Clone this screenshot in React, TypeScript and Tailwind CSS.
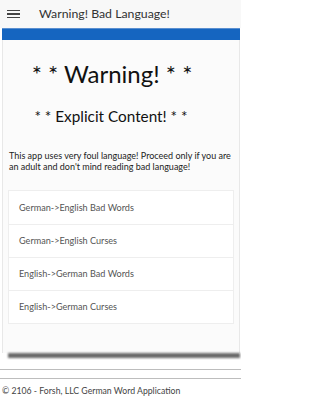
import React from "react";

const items = [
  "German->English Bad Words",
  "German->English Curses",
  "English->German Bad Words",
  "English->German Curses",
];

export default function App() {
  return (
    <div className="w-full max-w-[241px] h-[400px] overflow-hidden bg-white text-[#222]" style={{ fontFamily: 'Lato, "Open Sans", sans-serif' }}>
      <header className="h-[28px] flex items-center bg-[#f8f8f8] pl-[7px]">
        <div className="flex flex-col gap-[2px] w-[13px]">
          <div className="h-[1.5px] bg-[#444]" />
          <div className="h-[1.5px] bg-[#444]" />
          <div className="h-[1.5px] bg-[#444]" />
        </div>
        <span className="ml-[19px] mt-[1px] text-[12.3px] text-[#333] leading-none">Warning! Bad Language!</span>
      </header>
      <div className="pl-[2px] pr-[1px]">
        <div className="h-[12px] bg-[#1565c0] border-t border-[#5a8fd0]" />
        <div className="bg-[#fbfbfb] border-x border-[#e8e8e8] h-[313px] flex flex-col">
          <h1 className="text-center text-[24px] leading-none mt-[22px] pr-[18px] text-[#111]">* * Warning! * *</h1>
          <h2 className="text-center text-[15.3px] leading-none mt-[23px] pr-[20px] text-[#111]">* * Explicit Content! * *</h2>
          <p className="text-[9px] leading-[10.5px] mt-[27px] px-[6px] text-[#222]">
            This app uses very foul language! Proceed only if you are an adult and don't mind reading bad language!
          </p>
          <div className="mt-[18px] ml-[5px] mr-[5px] border border-[#eee] bg-white flex flex-col">
            {items.map((t, i) => (
              <div key={t} className={`h-[33px] flex items-center pl-[10px] text-[9.1px] text-[#555] ${i > 0 ? "border-t border-[#eee]" : ""}`}>
                {t}
              </div>
            ))}
          </div>
        </div>
        <div className="ml-[6px] h-[5px] bg-[#6a6a6a] blur-[1px]" />
      </div>
      <div className="mt-[11px] border-t border-[#bdbdbd]" />
      <div className="mt-[8px] border-t border-[#bdbdbd] pl-[2px] pt-[8px] text-[8.7px] text-[#444] leading-none">
        © 2106 - Forsh, LLC German Word Application
      </div>
    </div>
  );
}
